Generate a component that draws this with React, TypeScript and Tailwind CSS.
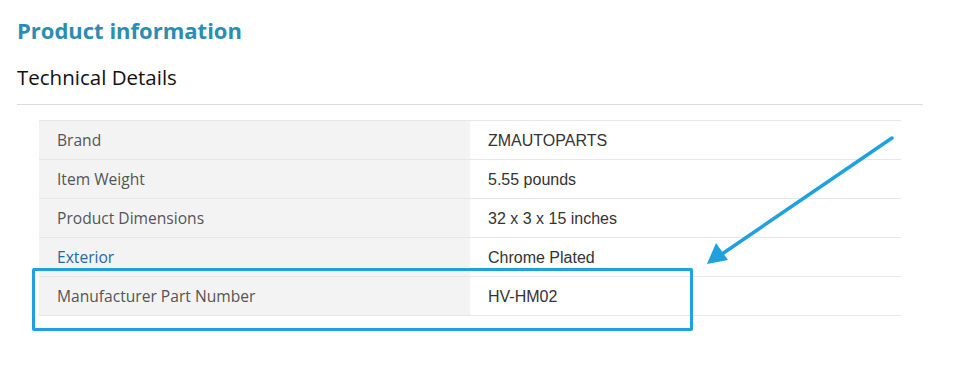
import React from 'react';

const rows = [
  { label: 'Brand', value: 'ZMAUTOPARTS' },
  { label: 'Item Weight', value: '5.55 pounds' },
  { label: 'Product Dimensions', value: '32 x 3 x 15 inches' },
  { label: 'Exterior', value: 'Chrome Plated', link: true },
  { label: 'Manufacturer Part Number', value: 'HV-HM02' },
];

export default function App() {
  return (
    <div className="relative w-[957px] h-[391px] bg-white overflow-hidden font-['Open_Sans',sans-serif]">
      <div className="pl-[17px] pt-[15px] w-[923px]">
        <h2 className="text-[22px] leading-[30px] font-bold text-[#2b8db2]">Product information</h2>
        <h3 className="mt-[18px] text-[20.5px] leading-[29px] text-[#111]">Technical Details</h3>
        <div className="mt-[12px] border-t border-[#dddddd]" />

        {/* Details table */}
        <div className="mt-[15px] ml-[22px] w-[862px] border-t border-[#e7e7e7]">
          {rows.map((row) => (
            <div key={row.label} className="flex h-[39px] border-b border-[#e7e7e7]">
              <div className="w-[431px] bg-[#f3f3f3] pl-[18px] pt-[2px] flex items-center text-[15.6px] text-[#555]">
                <span className={row.link ? 'text-[#1f6aa5]' : ''}>{row.label}</span>
              </div>
              <div className="flex-1 pl-[18px] pt-[1px] flex items-center text-[16px] text-[#333] font-['Liberation_Sans',Arial,sans-serif]">
                {row.value}
              </div>
            </div>
          ))}
        </div>
      </div>

      {/* Highlight box */}
      <div className="absolute left-[32px] top-[268px] w-[661px] h-[63px] border-[3px] border-[#1ea1dc] rounded-[2px]" />

      {/* Arrow */}
      <svg className="absolute left-0 top-0" width="957" height="391" viewBox="0 0 957 391">
        <line x1="892" y1="138" x2="722" y2="254" stroke="#1ea1dc" strokeWidth="3.5" strokeLinecap="round" />
        <polygon points="707,264 716,243 728,260" fill="#1ea1dc" />
      </svg>
    </div>
  );
}
